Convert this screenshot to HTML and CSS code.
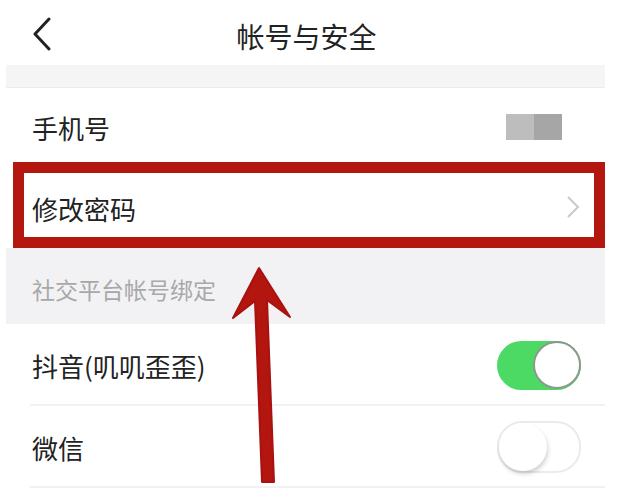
FILE: index.html
```html
<!DOCTYPE html>
<html lang="zh">
<head>
<meta charset="utf-8">
<link rel="stylesheet" href="styles.css">
</head>
<body>
<div class="page">
  <header class="nav">
    <svg class="back" width="20" height="34" viewBox="0 0 20 34"><path d="M17 2 L3 17 L17 32" fill="none" stroke="#222" stroke-width="3" stroke-linecap="round" stroke-linejoin="round"/></svg>
    <div class="title">帐号与安全</div>
  </header>
  <div class="band"></div>
  <div class="row phone">
    <span class="label">手机号</span>
    <span class="masked"><i></i><i class="dark"></i></span>
  </div>
  <div class="row boxed">
    <span class="label">修改密码</span>
    <svg class="chev" width="14" height="22" viewBox="0 0 14 22"><path d="M2 1 L12 11 L2 21" fill="none" stroke="#c9c9c9" stroke-width="2"/></svg>
  </div>
  <div class="section"><span class="section-text">社交平台帐号绑定</span></div>
  <div class="row toggle-row">
    <span class="label">抖音(叽叽歪歪)</span>
    <span class="switch on"><span class="knob"></span></span>
  </div>
  <div class="row toggle-row">
    <span class="label">微信</span>
    <span class="switch off"><span class="knob"></span></span>
  </div>
  <svg class="arrow" width="628" height="499" viewBox="0 0 628 499">
    <polygon points="259,268 233,318 255,301 262,482 274,482 267,300 290,317" fill="#b3150f" stroke="#a81210" stroke-width="2" stroke-linejoin="round"/>
  </svg>
</div>
</body>
</html>
```
FILE: styles.css
```css
html, body {
  margin: 0;
  padding: 0;
  background: #fff;
}
.page {
  position: relative;
  width: 628px;
  height: 499px;
  overflow: hidden;
  font-family: "Noto Sans CJK SC", "Noto Sans", sans-serif;
  color: #222;
}
.nav {
  position: relative;
  height: 65px;
  margin-left: 6px;
  width: 599px;
  display: flex;
  align-items: center;
  justify-content: center;
}
.back {
  position: absolute;
  left: 26px;
  top: 17px;
}
.title {
  font-size: 28px;
  line-height: 28px;
  margin-top: 6px;
  margin-left: 2px;
}
.band {
  margin-left: 6px;
  width: 599px;
  height: 22px;
  background: #f5f5f5;
  border-bottom: 1px solid #ececec;
}
.row {
  margin-left: 6px;
  width: 599px;
  box-sizing: border-box;
  display: flex;
  align-items: center;
  justify-content: space-between;
  padding: 0 24px 0 26px;
  background: #fff;
}
.label {
  font-size: 26px;
  line-height: 30px;
}
.phone {
  height: 74px;
}
.phone .label {
  margin-top: 6px;
}
.masked {
  display: flex;
  margin-right: 19px;
  margin-top: 4px;
}
.masked i {
  display: block;
  width: 28px;
  height: 26px;
  background: #bdbdbd;
}
.masked i.dark {
  background: #a6a6a6;
}
.boxed {
  margin-left: 13px;
  width: 592px;
  height: 86px;
  border: 11px solid #b3170e;
  padding: 0 14px 0 8px;
}
.boxed .label {
  margin-top: 8px;
}
.boxed .chev {
  margin-top: 4px;
}
.section {
  margin-left: 6px;
  width: 599px;
  height: 76px;
  box-sizing: border-box;
  background: #f2f2f4;
  padding: 0 0 0 26px;
  display: flex;
  align-items: center;
  font-size: 23px;
  color: #a8a8a8;
}
.section-text {
  margin-top: 6px;
}
.toggle-row {
  height: 82px;
  position: relative;
}
.toggle-row .label {
  margin-top: 2px;
}
.toggle-row::after {
  content: "";
  position: absolute;
  left: 24px;
  right: 0;
  bottom: 0;
  height: 2px;
  background: #f1f1f1;
}
.switch {
  position: relative;
  width: 84px;
  height: 49px;
  border-radius: 25px;
  box-sizing: border-box;
}
.switch.on {
  background: #4cd964;
}
.switch.off {
  background: #fff;
  border: 2px solid #ebebeb;
  height: 52px;
}
.knob {
  position: absolute;
  top: 0;
  width: 48px;
  height: 48px;
  border-radius: 50%;
  background: #fff;
  box-sizing: border-box;
}
.switch.on .knob {
  right: 0;
  top: 0.5px;
  border: 2px solid #8a9a8c;
}
.switch.off .knob {
  left: 0;
  top: 0;
  box-shadow: 1px 3px 4px rgba(0,0,0,0.18);
}
.arrow {
  position: absolute;
  left: 0;
  top: 0;
  pointer-events: none;
}
```
